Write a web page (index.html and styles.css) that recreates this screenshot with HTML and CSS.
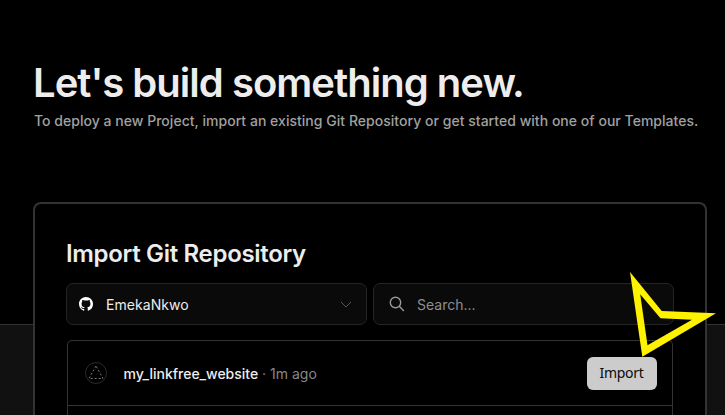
FILE: index.html
```html
<!DOCTYPE html>
<html lang="en">
<head>
<meta charset="utf-8">
<title>New Project</title>
<link rel="stylesheet" href="styles.css">
</head>
<body>
<header class="hero">
  <h1 class="hero-title">Let's build something new.</h1>
  <p class="hero-text">To deploy a new Project, import an existing Git Repository or get started with one of our Templates.</p>
</header>
<main class="band">
  <section class="card">
    <h2 class="card-title">Import Git Repository</h2>
    <div class="filters">
      <div class="field">
        <svg class="github" viewBox="0 0 16 16"><path fill="#fff" d="M8 0C3.58 0 0 3.58 0 8c0 3.54 2.29 6.53 5.47 7.59.4.07.55-.17.55-.38 0-.19-.01-.82-.01-1.49-2.01.37-2.53-.49-2.69-.94-.09-.23-.48-.94-.82-1.13-.28-.15-.68-.52-.01-.53.63-.01 1.08.58 1.23.82.72 1.21 1.87.87 2.33.66.07-.52.28-.87.51-1.07-1.78-.2-3.64-.89-3.64-3.95 0-.87.31-1.59.82-2.15-.08-.2-.36-1.02.08-2.12 0 0 .67-.21 2.2.82.64-.18 1.32-.27 2-.27s1.36.09 2 .27c1.53-1.04 2.2-.82 2.2-.82.44 1.1.16 1.92.08 2.12.51.56.82 1.27.82 2.15 0 3.07-1.87 3.75-3.65 3.95.29.25.54.73.54 1.48 0 1.07-.01 1.93-.01 2.2 0 .21.15.46.55.38A8.01 8.01 0 0 0 16 8c0-4.42-3.58-8-8-8z"/></svg>
        <span class="account">EmekaNkwo</span>
        <svg class="chevron" viewBox="0 0 12 7"><path d="M1 1l5 5 5-5"/></svg>
      </div>
      <div class="field search">
        <svg class="lens" viewBox="0 0 16 16"><circle cx="6.5" cy="6.5" r="5.2"/><path d="M10.3 10.3l4.6 4.6"/></svg>
        <span class="placeholder">Search...</span>
      </div>
    </div>
    <div class="repos">
      <div class="repo">
        <svg class="repo-icon" viewBox="0 0 22 22"><circle cx="11" cy="11" r="10.5"/><path d="M11 4L4 16.5h14z"/></svg>
        <span class="repo-name">my_linkfree_website</span>
        <span class="repo-age">· 1m ago</span>
        <button class="import">Import</button>
      </div>
    </div>
  </section>
</main>
<svg class="pointer" viewBox="0 0 86 85"><path fill="#fff200" fill-rule="evenodd" d="M0 0L31.7 39L86 41.3L12.3 84.7zM10.2 22.3L17.5 73.3L62 47.8L30.5 46.2z"/></svg>
</body>
</html>
```
FILE: styles.css
```css
* { box-sizing: border-box; }
body {
  margin: 0;
  height: 415px;
  overflow: hidden;
  background: #000;
  color: #ededed;
  font-family: Inter, sans-serif;
}
.hero { height: 202px; padding: 58px 0 0 34px; white-space: nowrap; }
.hero-title { margin: 0 0 0 -1px; font-size: 40px; line-height: 50px; font-weight: 640; letter-spacing: -0.98px; }
.hero-text { margin: 3px 0 0; font-size: 14px; line-height: 20px; font-weight: 500; letter-spacing: 0.03px; color: #a1a1a1; }
.band {
  height: 213px;
  padding: 0 18px 0 33px;
  background: linear-gradient(#000 122px, #333 122px, #333 123px, #111 123px);
}
.card {
  display: flex;
  flex-direction: column;
  height: 213px;
  padding: 34px 31px 0;
  border: 2px solid #333;
  border-bottom: 0;
  border-radius: 8px 8px 0 0;
  background: #000;
}
.card-title { margin: 0; font-size: 24px; line-height: 32px; font-weight: 620; letter-spacing: -0.32px; }
.filters { display: flex; gap: 6px; margin-top: 13px; }
.field {
  display: flex;
  align-items: center;
  width: 301px;
  height: 42px;
  padding: 0 14px 0 12px;
  border: 1px solid #242424;
  border-radius: 7px;
  background: #0a0a0a;
  font-size: 14px;
}
.search { padding-left: 15px; }
.github { width: 14px; height: 14px; }
.account { flex: 1; margin: 1px 0 0 13px; letter-spacing: 0.05px; }
.chevron { width: 12px; height: 7px; fill: none; stroke: #555; }
.lens { width: 16px; height: 16px; fill: none; stroke: #999; stroke-width: 1.4; }
.placeholder { margin: 1px 0 0 12px; color: #8f8f8f; }
.repos {
  flex: 1;
  margin: 15px 1px 0;
  border: 1px solid #333;
  border-bottom: 0;
  border-radius: 5px 5px 0 0;
}
.repo { display: flex; align-items: center; height: 65px; padding: 0 15.5px 0 17px; border-bottom: 1px solid #333; font-size: 14px; }
.repo-icon { width: 22px; height: 22px; fill: none; stroke: #2a2a2a; }
.repo-icon path { stroke: #777; stroke-dasharray: 2 2; }
.repo-name { margin: 1px 4px 0 16.5px; font-weight: 500; letter-spacing: -0.02px; }
.repo-age { flex: 1; margin-top: 1px; color: #888; }
.import {
  width: 70px;
  height: 33px;
  padding: 0 0 1px;
  border: 0;
  border-radius: 6px;
  background: #ccc;
  color: #0a0a0a;
  font: 14px "Noto Sans", sans-serif;
  letter-spacing: -0.3px;
}
.pointer { position: absolute; left: 630px; top: 272px; width: 86px; height: 85px; }
```
